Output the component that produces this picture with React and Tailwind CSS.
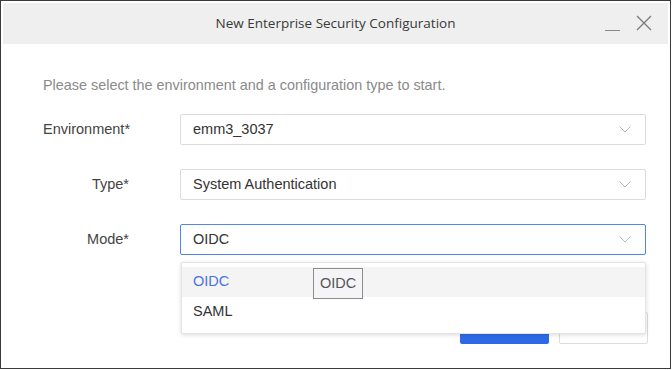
import React from "react";

function Chevron() {
  return (
    <svg width="12" height="7" viewBox="0 0 12 7" fill="none" className="shrink-0">
      <path d="M0.5 0.5 L6 6 L11.5 0.5" stroke="#b8b8b8" strokeWidth="1" />
    </svg>
  );
}

function SelectBox({ value, focused }) {
  return (
    <div
      className={
        "flex h-[31px] w-[466px] items-center justify-between rounded-[2px] border bg-white pl-[12px] pr-[14px] " +
        (focused ? "border-[#4f87ec]" : "border-[#dcdcdc]")
      }
    >
      <span className="text-[14.5px] text-[#333]">{value}</span>
      <Chevron />
    </div>
  );
}

function Row({ label, children, className = "" }) {
  return (
    <div className={"flex items-center " + className}>
      <div className="w-[86px] whitespace-nowrap text-right text-[14.5px] text-[#444]">{label}</div>
      <div className="ml-[51px]">{children}</div>
    </div>
  );
}

export default function App() {
  return (
    <div
      className="relative h-[370px] w-[672px] overflow-hidden bg-white"
      style={{ fontFamily: '"Liberation Sans", Arial, sans-serif' }}
    >
      <div className="flex h-[369px] w-[671px] flex-col border border-[#3a3a3a] bg-white p-[2px]">
        <div className="relative flex h-[41px] shrink-0 items-center justify-center bg-[#efefef]">
          <span
            className="text-[13.5px] text-[#3a3a3a]"
            style={{ fontFamily: '"Open Sans", "Noto Sans", sans-serif' }}
          >
            New Enterprise Security Configuration
          </span>
          <div className="absolute right-[16px] top-[12px] flex items-end gap-[16px]">
            <div className="h-[1.5px] w-[15px] bg-[#8a8a8a]" />
            <svg width="16" height="16" viewBox="0 0 16 16" fill="none">
              <path d="M1 1 L15 15 M15 1 L1 15" stroke="#7a7a7a" strokeWidth="1.3" />
            </svg>
          </div>
        </div>

        <div className="flex flex-col pl-[40px] pr-[21px]">
          <p className="mt-[31px] text-[14.4px] leading-[20px] text-[#8a8a8a]">
            Please select the environment and a configuration type to start.
          </p>

          <Row label="Environment*" className="mt-[19px]">
            <SelectBox value="emm3_3037" />
          </Row>
          <Row label="Type*" className="mt-[24px]">
            <SelectBox value="System Authentication" />
          </Row>
          <Row label="Mode*" className="relative mt-[24px]">
            <div className="relative">
              <SelectBox value="OIDC" focused />
              <div className="absolute left-[1px] top-[38px] z-10 w-[465px] rounded-[2px] border border-[#e4e4e4] bg-white pb-[6px] pt-[4px] shadow-[0_1px_4px_rgba(0,0,0,0.15)]">
                <div className="flex h-[30px] items-center bg-[#f4f4f4] pl-[11px] text-[14.5px] text-[#4a73e8]">
                  OIDC
                </div>
                <div className="flex h-[30px] items-center pl-[11px] text-[14.5px] text-[#333]">
                  SAML
                </div>
                <div className="absolute left-[131px] top-[5px] flex h-[31px] w-[50px] items-center justify-center border border-[#8c8c8c] bg-[#f5f5f7] text-[14.5px] text-[#555]">
                  OIDC
                </div>
              </div>
            </div>
          </Row>

          <div className="-mr-[1px] mt-[57px] flex justify-end gap-[10px]">
            <div className="h-[32px] w-[89px] rounded-[2px] bg-[#2f6ae6]" />
            <div className="h-[32px] w-[89px] rounded-[2px] border border-[#dcdcdc] bg-white" />
          </div>
        </div>
      </div>
    </div>
  );
}
